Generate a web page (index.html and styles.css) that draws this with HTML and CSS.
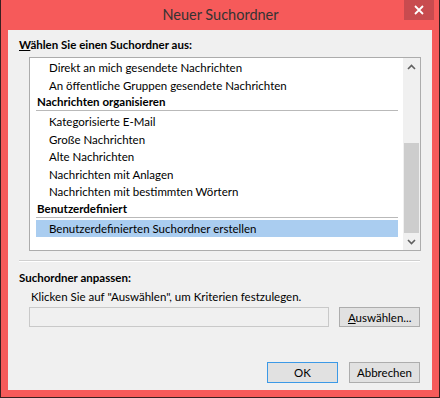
FILE: index.html
```html
<!DOCTYPE html>
<html lang="de">
<head>
    <meta charset="UTF-8">
    <title>Neuer Suchordner</title>
    <link rel="stylesheet" href="styles.css">
</head>
<body>
    <div class="window">
        <div class="titlebar">
            <span></span>
            <div class="title">Neuer Suchordner</div>
            <div class="close-wrap">
                <button class="close" type="button" aria-label="Schließen">
                    <svg width="10" height="10" viewBox="0 0 10 10"><path d="M1 1 L9 9 M9 1 L1 9" stroke="#fff" stroke-width="1.8" fill="none"/></svg>
                </button>
            </div>
        </div>

        <div class="client">
            <div class="group-label"><u>W</u>ählen Sie einen Suchordner aus:</div>

            <div class="listbox">
                <div class="list-items">
                    <div class="item">Direkt an mich gesendete Nachrichten</div>
                    <div class="item">An öffentliche Gruppen gesendete Nachrichten</div>
                    <div class="header">Nachrichten organisieren</div>
                    <div class="item">Kategorisierte E-Mail</div>
                    <div class="item">Große Nachrichten</div>
                    <div class="item">Alte Nachrichten</div>
                    <div class="item">Nachrichten mit Anlagen</div>
                    <div class="item">Nachrichten mit bestimmten Wörtern</div>
                    <div class="header">Benutzerdefiniert</div>
                    <div class="item selected">Benutzerdefinierten Suchordner erstellen</div>
                </div>
                <div class="scrollbar">
                    <div class="arrow">
                        <svg width="9" height="6" viewBox="0 0 9 6"><path d="M1 5 L4.5 1.5 L8 5" stroke="#606060" stroke-width="1.6" fill="none"/></svg>
                    </div>
                    <div class="track"><div class="thumb"></div></div>
                    <div class="arrow">
                        <svg width="9" height="6" viewBox="0 0 9 6"><path d="M1 1 L4.5 4.5 L8 1" stroke="#606060" stroke-width="1.6" fill="none"/></svg>
                    </div>
                </div>
            </div>

            <div class="sep"></div>

            <div class="group-label second">Suchordner anpassen:</div>
            <div class="hint">Klicken Sie auf "Auswählen", um Kriterien festzulegen.</div>
            <div class="criteria-row">
                <div class="textbox"></div>
                <button class="btn choose" type="button"><u>A</u>uswählen...</button>
            </div>

            <div class="footer">
                <button class="btn ok" type="button">OK</button>
                <button class="btn cancel" type="button">Abbrechen</button>
            </div>
        </div>
    </div>
</body>
</html>
```

FILE: styles.css
```css
/* Reset */
* {
    margin: 0;
    padding: 0;
    box-sizing: border-box;
}
body {
    font-family: Lato, "Noto Sans", Arial, sans-serif;
    font-size: 11.5px;
    color: #000;
    background: #f65a5a;
}
.window {
    width: 440px;
    height: 398px;
    background-color: #f65a5a;
    border: 1px solid #3a2020;
    border-top: none;
}

/* Titelleiste */
.titlebar {
    height: 30px;
    display: grid;
    grid-template-columns: 1fr auto 1fr;
    align-items: start;
}
.title {
    font-size: 14.5px;
    line-height: 30px;
    color: #333;
    padding-left: 1px;
}
.close-wrap {
    display: flex;
    justify-content: flex-end;
    padding-right: 5px;
}
.close {
    width: 30px;
    height: 20px;
    border: none;
    background-color: #c84b4f;
    display: flex;
    align-items: center;
    justify-content: center;
}

/* Innenbereich */
.client {
    margin-left: 7px;
    width: 424px;
    height: 360px;
    background-color: #f0f0f0;
    padding: 7px 12px 0 11px;
}
.group-label {
    font-weight: bold;
    line-height: 16px;
}
.group-label.second {
    margin-top: 8px;
}

/* Liste */
.listbox {
    margin: 4px 0 0 10px;
    width: 392px;
    height: 194px;
    border: 1px solid #acacac;
    background-color: #fff;
    display: flex;
}
.list-items {
    flex: 1;
    padding: 1px 5px 0 6px;
    overflow: hidden;
}
.item {
    line-height: 17.5px;
    padding-left: 13px;
    white-space: nowrap;
}
.item.selected {
    background-color: #aacdf0;
}
.header {
    font-weight: bold;
    line-height: 16px;
    padding-left: 1px;
    border-bottom: 1px solid #b9b9b9;
    margin-bottom: 2px;
}
.scrollbar {
    width: 17px;
    background-color: #f0f0f0;
    display: flex;
    flex-direction: column;
}
.arrow {
    height: 17px;
    display: flex;
    align-items: center;
    justify-content: center;
}
.track {
    flex: 1;
    display: flex;
    flex-direction: column;
    justify-content: flex-end;
}
.thumb {
    height: 90px;
    margin: 0 1px;
    background-color: #cdcdcd;
}

.sep {
    margin-top: 9px;
    height: 2px;
    border-top: 1px solid #d0d0d0;
    border-bottom: 1px solid #fff;
}

.hint {
    margin-top: 3px;
    padding-left: 12px;
    line-height: 16px;
}
.criteria-row {
    margin: 2px 0 0 10px;
    display: flex;
    gap: 10px;
}
.textbox {
    width: 302px;
    height: 20px;
    border: 1px solid #c9c9c9;
    background-color: #f0f0f0;
}

/* Schaltflächen */
.btn {
    font-family: inherit;
    font-size: 11.5px;
    color: #000;
    background-color: #e1e1e1;
    border: 1px solid #adadad;
    height: 20px;
}
.choose {
    width: 81px;
}
.footer {
    margin-top: 35px;
    display: flex;
    justify-content: flex-end;
    gap: 11px;
}
.footer .btn {
    width: 71px;
    height: 21px;
}
.ok {
    border-color: #3c99e6;
}
```
